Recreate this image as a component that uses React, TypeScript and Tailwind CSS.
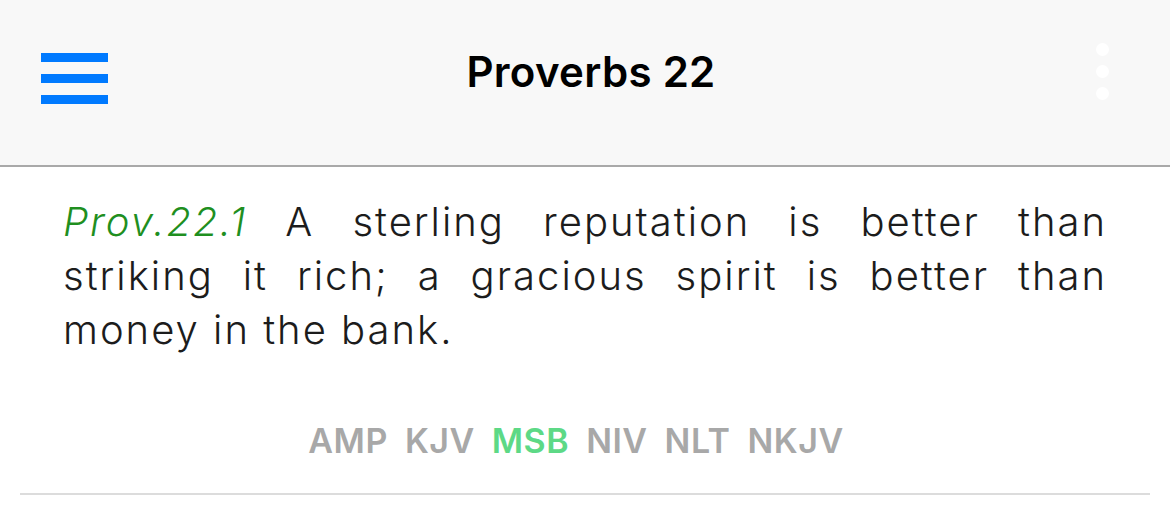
import React from "react";

const versions = ["AMP", "KJV", "MSB", "NIV", "NLT", "NKJV"];

export default function App() {
  const active = "MSB";

  return (
    <div
      className="w-[1170px] h-[507px] bg-white overflow-hidden"
      style={{ fontFamily: "Inter, 'Noto Sans', sans-serif" }}
    >
      <header className="h-[167px] bg-[#f8f8f8] border-b-2 border-[#a9a9a9] flex items-center justify-between pl-[41px] pr-[61px] pb-[22px]">
        <button className="flex flex-col gap-[12px] w-[67px] mt-[14px]">
          <span className="block h-[9px] bg-[#007aff]" />
          <span className="block h-[9px] bg-[#007aff]" />
          <span className="block h-[9px] bg-[#007aff]" />
        </button>
        <h1 className="text-[42px] font-semibold text-black tracking-[0.3px] mr-[22px]">
          Proverbs 22
        </h1>
        <button className="flex flex-col gap-[9px] w-[13px]">
          <span className="block w-[13px] h-[13px] rounded-full bg-white" />
          <span className="block w-[13px] h-[13px] rounded-full bg-white" />
          <span className="block w-[13px] h-[13px] rounded-full bg-white" />
        </button>
      </header>

      <div className="px-[63px] pt-[28px]">
        <p className="text-[40px] leading-[54px] font-light text-[#1c1c1c] text-justify tracking-[2px]">
          <span className="italic text-[#1f8f1f]">Prov.22.1</span> A sterling
          reputation is better than striking it rich; a gracious spirit is
          better than money in the bank.
        </p>
      </div>

      <div className="flex justify-center gap-[17px] mt-[67px] pr-[18px]">
        {versions.map((v) => (
          <span
            key={v}
            className={
              "text-[34px] font-semibold leading-none tracking-[0.5px] " +
              (v === active ? "text-[#5dd986]" : "text-[#a8a8a8]")
            }
          >
            {v}
          </span>
        ))}
      </div>

      <div className="mx-[20px] mt-[35px] h-[2px] bg-[#dcdcdc]" />
    </div>
  );
}
